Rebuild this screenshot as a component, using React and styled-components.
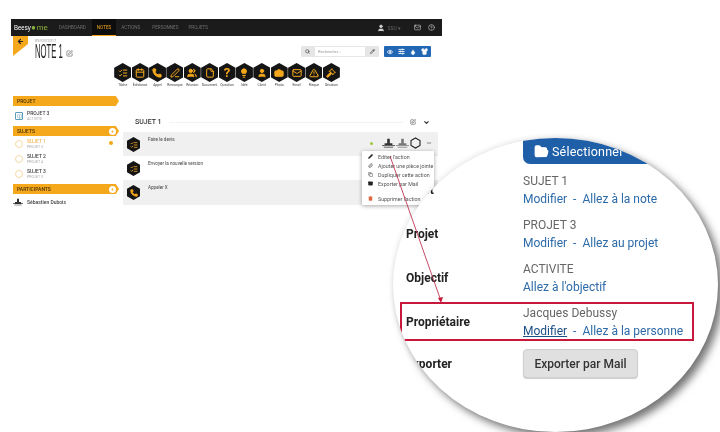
import React from "react";
import styled, { createGlobalStyle } from "styled-components";
import {
  ArrowLeft, BookOpen, Calendar, Camera, ChevronDown, Copy, Droplet, Eye, File, FolderOpen, Gavel, HelpCircle,
  Lightbulb, ListChecks, Mail, Minus, Paperclip, PenLine, Pencil, Phone, Search, Shirt, SlidersHorizontal,
  SquarePen, Trash2, TriangleAlert, User, Users,
} from "lucide-react";

const Global = createGlobalStyle`
  html, body { margin: 0; padding: 0; background: #fff; }
  body { font-family: "Roboto", "Liberation Sans", sans-serif; }
`;

const Page = styled.div`
  position: relative;
  width: 720px;
  height: 432px;
  overflow: hidden;
  background: #fff;
  padding: 19px 0 0 11px;
  box-sizing: border-box;
  filter: blur(0.45px);
`;

const Shell = styled.div`
  width: 431px;
`;

const TopBar = styled.div`
  height: 17px;
  background: #1b1b1b;
  display: flex;
  align-items: center;
  padding: 0 5px 0 3px;
`;

const Logo = styled.div`
  width: 40px;
  font: 8px "Liberation Sans", sans-serif;
  color: #fff;
  display: flex;
  align-items: center;
  span { color: #8cb33c; margin-left: 1px; }
`;

const LogoWord = styled.div`
  width: 16px;
  transform: scaleX(0.75);
  transform-origin: left;
`;

const NavItem = styled.div`
  height: 100%;
  display: flex;
  align-items: center;
  padding: 0 5px;
  margin-right: ${(p) => p.$gap || 0}px;
  font-size: 4.6px;
  color: ${(p) => (p.$active ? "#f5a81c" : "#6e6e6e")};
  background: ${(p) => (p.$active ? "#0d0d0d" : "transparent")};
  box-shadow: ${(p) => (p.$active ? "inset 0 -1px 0 #f5a81c" : "none")};
`;

const TopRight = styled.div`
  margin-left: auto;
  display: flex;
  align-items: center;
  gap: 3px;
  padding-right: 2px;
  color: #cfcfcf;
  font-size: 5px;
  span { color: #666; margin-right: 10px; }
`;

const Header = styled.div`
  height: 27px;
  display: flex;
  padding-left: 2px;
`;

const BackTab = styled.div`
  width: 15px;
  height: 20px;
  background: #f5a81c;
  clip-path: polygon(0 0, 100% 0, 100% 40%, 0 100%);
  display: flex;
  justify-content: center;
  padding-top: 2px;
  box-sizing: border-box;
  color: #222;
`;

const TitleBlock = styled.div`
  margin-left: 7px;
  padding-top: 2px;
`;

const DateText = styled.div`
  font-size: 4px;
  line-height: 5px;
  color: #999;
`;

const Title = styled.div`
  display: flex;
  align-items: center;
  gap: 2px;
  font: 20px/17px "Liberation Sans", sans-serif;
  color: #222;
  svg { margin-top: 4px; color: #555; }
`;

const TitleText = styled.div`
  width: 29px;
  white-space: nowrap;
  transform: scaleX(0.385);
  transform-origin: left;
`;

const Tools = styled.div`
  margin-left: auto;
  margin-right: 11px;
  padding-top: 10px;
  display: flex;
  align-items: flex-start;
  gap: 5px;
`;

const SearchBox = styled.div`
  width: 78px;
  height: 11px;
  background: #e6e6e6;
  border-radius: 1px;
  display: flex;
  align-items: center;
  justify-content: space-between;
  padding: 0 4px;
  box-sizing: border-box;
  color: #444;
`;

const SearchInput = styled.div`
  width: 50px;
  height: 9px;
  background: #fff;
  font-size: 4px;
  line-height: 9px;
  color: #999;
  padding-left: 3px;
  box-sizing: border-box;
`;

const BlueGroup = styled.div`
  width: 47px;
  height: 11px;
  background: #2267b4;
  border-radius: 1px;
  display: flex;
  align-items: center;
  justify-content: space-around;
  color: #fff;
`;

const HexRow = styled.div`
  height: 27px;
  display: flex;
  padding-left: 103px;
`;

const HexItem = styled.div`
  width: 17.4px;
  display: flex;
  flex-direction: column;
  align-items: center;
  font-size: 3.4px;
  color: #444;
`;

const HexWrap = styled.div`
  position: relative;
  flex: none;
  width: ${(p) => p.$w}px;
  height: ${(p) => p.$h}px;
  background: #151515;
  clip-path: polygon(50% 0, 100% 25%, 100% 75%, 50% 100%, 0 75%, 0 25%);
  display: flex;
  align-items: center;
  justify-content: center;
  color: #f5a81c;
  margin-bottom: 1px;
  font-size: 13px;
  font-weight: 700;
`;

const Body = styled.div`
  display: flex;
  padding-left: 2px;
`;

const Sidebar = styled.div`
  width: 106px;
  padding-top: 6px;
`;

const Banner = styled.div`
  height: 10px;
  background: #f5a81c;
  clip-path: polygon(0 0, 97% 0, 100% 50%, 97% 100%, 0 100%);
  display: flex;
  align-items: center;
  justify-content: space-between;
  padding: 0 3px 0 4px;
  margin-top: ${(p) => p.$top || 0}px;
  box-sizing: border-box;
  font-size: 5px;
  font-weight: 500;
  color: #4a3205;
`;

const Badge = styled.div`
  width: 7px;
  height: 7px;
  border-radius: 50%;
  background: #fff;
  font-size: 5px;
  line-height: 7px;
  text-align: center;
  color: #f5a81c;
`;

const SideRow = styled.div`
  height: ${(p) => p.$h || 15}px;
  display: flex;
  align-items: center;
  padding-left: 2px;
  gap: 4px;
  position: relative;
`;

const SideIcon = styled.div`
  width: 8px;
  height: 8px;
  flex: none;
  display: flex;
  align-items: center;
  justify-content: center;
  border: 1px solid ${(p) => p.$c};
  border-radius: ${(p) => (p.$round ? "50%" : "1px")};
  box-sizing: border-box;
`;

const PersonIcon = styled.div`
  margin-left: -2px;
  display: flex;
`;

const SideName = styled.div`
  font-size: 5px;
  line-height: 7px;
  font-weight: 500;
  color: ${(p) => (p.$active ? "#f5b95a" : "#444")};
`;

const SideSub = styled.div`
  font-size: 3.6px;
  line-height: 5px;
  color: #aaa;
`;

const Dot = styled.div`
  position: absolute;
  left: 96px;
  top: 5px;
  width: 4px;
  height: 4px;
  border-radius: 50%;
  background: #f5a81c;
`;

const Main = styled.div`
  flex: 1;
  margin-left: 4px;
  margin-right: 4px;
`;

const SubjectHead = styled.div`
  height: 42px;
  display: flex;
  align-items: center;
  gap: 7px;
  padding: 22px 8px 0 12px;
  font-size: 7px;
  font-weight: 500;
  color: #333;
  box-sizing: border-box;
`;

const HeadLine = styled.div`
  flex: 1;
  height: 1px;
  background: #f3f3f3;
`;

const ActionRow = styled.div`
  position: relative;
  height: ${(p) => p.$h || 24}px;
  background: ${(p) => (p.$grey ? "#f0f0f0" : "#fff")};
  display: flex;
  padding: 5px 4px 0;
  box-sizing: border-box;
  gap: 8px;
  font-size: 4.6px;
  color: #444;
`;

const RowIcons = styled.div`
  margin-left: auto;
  display: flex;
  align-items: center;
  gap: 1px;
  color: #222;
  padding-right: 2px;
  height: 12px;
`;

const GreenDot = styled.div`
  width: 3px;
  height: 3px;
  border-radius: 50%;
  background: #9ec83c;
  margin-right: 8px;
`;

const Menu = styled.div`
  position: absolute;
  left: 239px;
  top: 19px;
  width: 72px;
  height: 54px;
  background: #fff;
  box-shadow: 0 1px 4px rgba(0, 0, 0, 0.35);
  border-radius: 1px;
  padding-top: 1px;
  box-sizing: border-box;
  z-index: 2;
`;

const MenuItem = styled.div`
  height: 9px;
  display: flex;
  align-items: center;
  gap: 5px;
  padding-left: 6px;
  font-size: 5.3px;
  white-space: nowrap;
  color: #555;
  margin-top: ${(p) => p.$top || 0}px;
  svg { color: ${(p) => p.$c || "#222"}; flex: none; }
`;

const Lens = styled.div`
  position: absolute;
  left: 393px;
  top: 138px;
  width: 325px;
  height: 294px;
  border-radius: 50%;
  background: #fff;
  box-shadow: 5px 5px 9px rgba(0, 0, 0, 0.55), -1px -2px 5px rgba(0, 0, 0, 0.06);
  z-index: 3;
`;

const LensClip = styled.div`
  width: 100%;
  height: 100%;
  border-radius: 50%;
  overflow: hidden;
  box-sizing: border-box;
  padding: 0 0 0 13px;
`;

const FolderButton = styled.div`
  margin-left: 117px;
  width: 190px;
  height: 26px;
  background: #1f5fa8;
  border-radius: 0 0 0 7px;
  color: #fff;
  display: flex;
  align-items: center;
  gap: 3px;
  padding-left: 11px;
  box-sizing: border-box;
  font-size: 12.5px;
  letter-spacing: 0.2px;
`;

const Field = styled.div`
  display: grid;
  grid-template-columns: 117px 1fr;
  align-items: center;
  height: ${(p) => p.$h || 44}px;
  margin-top: ${(p) => p.$top || 0}px;
  font-size: 12px;
  line-height: 18px;
`;

const BoxedField = styled(Field)`
  width: 294px;
  height: 39px;
  margin-left: -6px;
  padding-left: 4px;
  border: 2px solid #c8193c;
  box-sizing: border-box;
`;

const Label = styled.div`
  font-weight: 700;
  color: #222;
`;

const Value = styled.div`
  color: #666;
`;

const Links = styled.div`
  color: #2c6aa8;
  white-space: nowrap;
  u { color: #1e4f86; }
  i { font-style: normal; margin: 0 6px; }
`;

const GreyButton = styled.div`
  width: 115px;
  height: 29px;
  background: #e0e0e0;
  border: 1px solid #cfcfcf;
  border-radius: 4px;
  box-shadow: 0 1px 1px rgba(0, 0, 0, 0.2);
  box-sizing: border-box;
  display: flex;
  align-items: center;
  justify-content: center;
  color: #333;
  font-weight: 500;
`;

const Arrow = styled.svg`
  position: absolute;
  left: 0;
  top: 0;
  z-index: 4;
  pointer-events: none;
`;

const hexes = [
  ["Tâche", ListChecks], ["Échéance", Calendar], ["Appel", Phone, true], ["Remarque", PenLine],
  ["Réunion", Users, true], ["Document", File], ["Question", null], ["Idée", Lightbulb, true],
  ["Client", User, true], ["Photo", Camera, true], ["Email", Mail], ["Risque", TriangleAlert], ["Décision", Gavel, true],
];

const Hex = ({ icon: Icon, solid, w = 17, h = 19, size = 10 }) => (
  <HexWrap $w={w} $h={h}>
    {Icon ? <Icon size={size} strokeWidth={2.4} fill={solid ? "currentColor" : "none"} /> : "?"}
  </HexWrap>
);

const Ship = ({ w = 13, color = "#333" }) => (
  <svg width={w} height={w * 0.8} viewBox="0 0 15 12">
    <path d="M0 8h15v1H0zM2 10h11v1H2zM3 6h9v2H3zM6 1h3v5H6z" fill={color} />
  </svg>
);

const subjects = [
  ["SUJET 1", "PROJET 3", true],
  ["SUJET 2", "PROJET 4", false],
  ["SUJET 3", "PROJET 3", false],
];

export default function App() {
  return (
    <>
      <Global />
      <Page>
        <Shell>
          <TopBar>
            <Logo><LogoWord>Beesy</LogoWord><span>●</span><span>me</span></Logo>
            <NavItem $gap={1}>DASHBOARD</NavItem>
            <NavItem $active>NOTES</NavItem>
            <NavItem $gap={2}>ACTIONS</NavItem>
            <NavItem>PERSONNES</NavItem>
            <NavItem>PROJETS</NavItem>
            <TopRight>
              <User size={8} fill="#cfcfcf" />
              <span>SSU ▾</span>
              <Mail size={7} />
              <HelpCircle size={7} style={{ marginLeft: 4 }} />
            </TopRight>
          </TopBar>
          <Header>
            <BackTab><ArrowLeft size={7} strokeWidth={4} /></BackTab>
            <TitleBlock>
              <DateText>09/03/2017</DateText>
              <Title><TitleText>NOTE 1</TitleText><SquarePen size={7} /></Title>
            </TitleBlock>
            <Tools>
              <SearchBox>
                <Search size={5} strokeWidth={3} />
                <SearchInput>Rechercher...</SearchInput>
                <Pencil size={5} strokeWidth={3} />
              </SearchBox>
              <BlueGroup>
                <Eye size={6} strokeWidth={3} />
                <SlidersHorizontal size={7} strokeWidth={3} />
                <Droplet size={6} fill="#fff" />
                <Shirt size={7} fill="#fff" />
              </BlueGroup>
            </Tools>
          </Header>
          <HexRow>
            {hexes.map(([name, icon, solid]) => (
              <HexItem key={name}>
                <Hex icon={icon} solid={solid} />
                {name}
              </HexItem>
            ))}
          </HexRow>
          <Body>
            <Sidebar>
              <Banner>PROJET</Banner>
              <SideRow $h={20}>
                <SideIcon $c="#5a9bb5"><BookOpen size={5} color="#5a9bb5" /></SideIcon>
                <div>
                  <SideName>PROJET 3</SideName>
                  <SideSub>ACTIVITE</SideSub>
                </div>
              </SideRow>
              <Banner>SUJETS<Badge>+</Badge></Banner>
              {subjects.map(([name, sub, active]) => (
                <SideRow key={name} $h={15}>
                  <SideIcon $c="#f6d9a6" $round />
                  <div>
                    <SideName $active={active}>{name}</SideName>
                    <SideSub>{sub}</SideSub>
                  </div>
                  {active && <Dot />}
                </SideRow>
              ))}
              <Banner $top={3}>PARTICIPANTS<Badge>+</Badge></Banner>
              <SideRow $h={16}>
                <PersonIcon><Ship w={10} /></PersonIcon>
                <SideName>Sébastien Dubois</SideName>
              </SideRow>
            </Sidebar>
            <Main>
              <SubjectHead>
                SUJET 1
                <HeadLine />
                <SquarePen size={6} />
                <ChevronDown size={7} strokeWidth={4} />
              </SubjectHead>
              <ActionRow $grey>
                <Hex icon={ListChecks} w={13} h={15} size={8} />
                <div>Faire le devis</div>
                <RowIcons>
                  <GreenDot />
                  <Ship />
                  <Ship color="#777" />
                  <svg width="11" height="12" viewBox="0 0 11 12">
                    <path d="M5.5 1 10 3.5v5L5.5 11 1 8.5v-5z" fill="none" stroke="#222" strokeWidth="1.1" />
                  </svg>
                  <Minus size={6} style={{ marginLeft: 4 }} />
                </RowIcons>
                <Menu>
                  <MenuItem><Pencil size={5} fill="#222" />Editer l'action</MenuItem>
                  <MenuItem><Paperclip size={5} />Ajouter une pièce jointe</MenuItem>
                  <MenuItem><Copy size={5} />Dupliquer cette action</MenuItem>
                  <MenuItem><Mail size={5} fill="#222" />Exporter par Mail</MenuItem>
                  <MenuItem $top={6} $c="#e0603a"><Trash2 size={5} fill="#e0603a" />Supprimer l'action</MenuItem>
                </Menu>
              </ActionRow>
              <ActionRow>
                <Hex icon={ListChecks} w={13} h={15} size={8} />
                <div>Envoyer la nouvelle version</div>
              </ActionRow>
              <ActionRow $grey $h={25}>
                <Hex icon={Phone} solid w={13} h={15} size={8} />
                <div>Appeler X</div>
              </ActionRow>
            </Main>
          </Body>
        </Shell>

        <Lens>
          <LensClip>
            <FolderButton><FolderOpen size={15} fill="#fff" />Sélectionner</FolderButton>
            <Field $top={4}>
              <Label>Sujet</Label>
              <div>
                <Value>SUJET 1</Value>
                <Links>Modifier<i>-</i>Allez à la note</Links>
              </div>
            </Field>
            <Field>
              <Label>Projet</Label>
              <div>
                <Value>PROJET 3</Value>
                <Links>Modifier<i>-</i>Allez au projet</Links>
              </div>
            </Field>
            <Field>
              <Label>Objectif</Label>
              <div>
                <Value>ACTIVITE</Value>
                <Links>Allez à l'objectif</Links>
              </div>
            </Field>
            <BoxedField $top={2}>
              <Label>Propriétaire</Label>
              <div>
                <Value>Jacques Debussy</Value>
                <Links><u>Modifier</u><i>-</i>Allez à la personne</Links>
              </div>
            </BoxedField>
            <Field $h={29} $top={8}>
              <Label>Exporter</Label>
              <GreyButton>Exporter par Mail</GreyButton>
            </Field>
          </LensClip>
        </Lens>

        <Arrow width="720" height="432">
          <path d="M390 156 441 301" stroke="#b5203f" strokeWidth="0.8" fill="none" />
          <path d="M441 303 438 298 443 297z" fill="#c8193c" />
        </Arrow>
      </Page>
    </>
  );
}
